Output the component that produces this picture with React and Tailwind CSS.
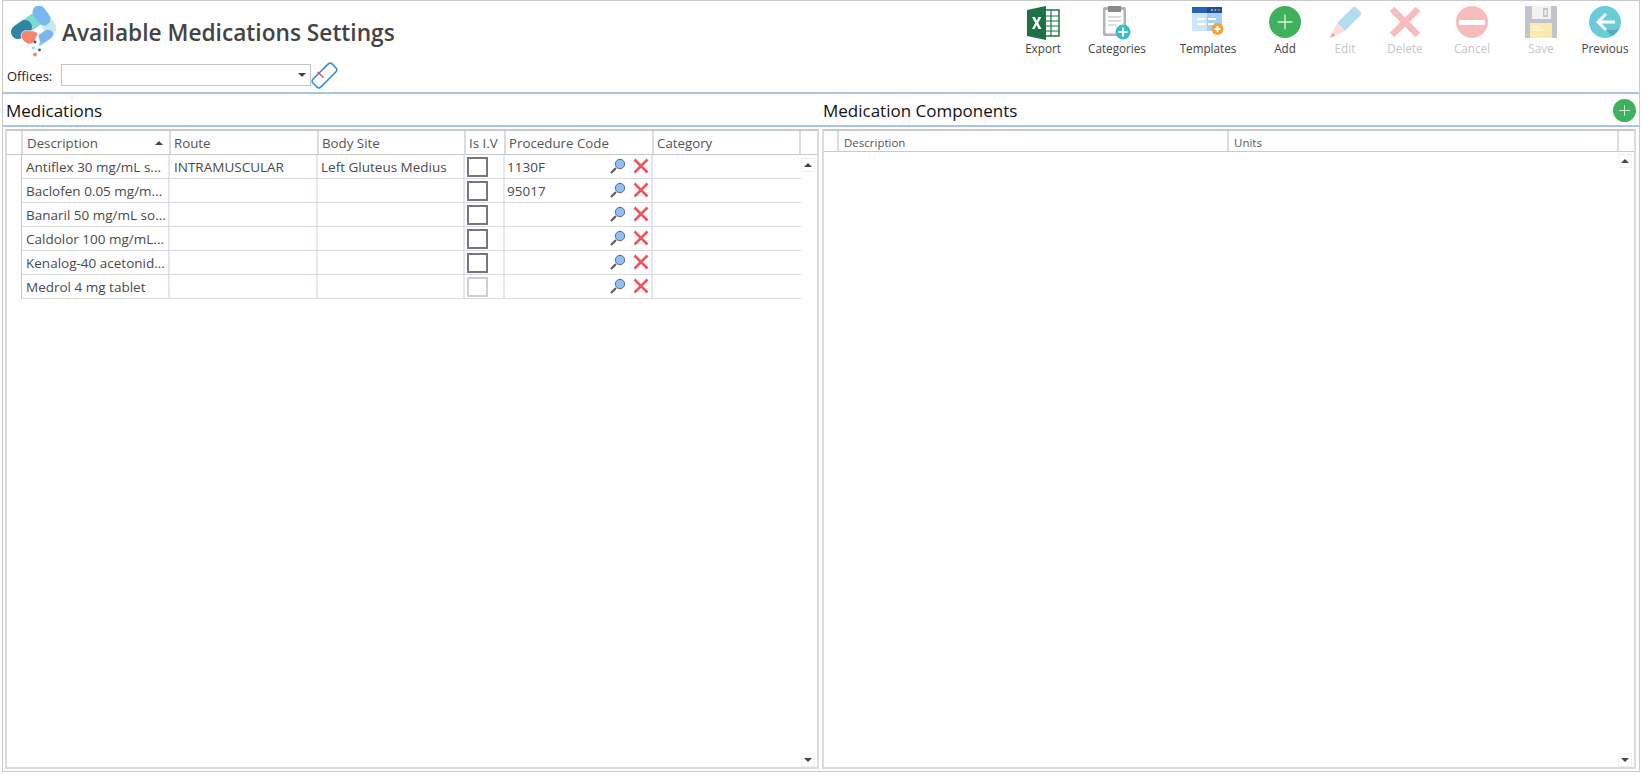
import React from "react";
import { Plus } from "lucide-react";

const FONT = "font-['Open_Sans','Noto_Sans',sans-serif]";

const medications = [
  { name: "Antiflex 30 mg/mL s...", route: "INTRAMUSCULAR", site: "Left Gluteus Medius", code: "1130F" },
  { name: "Baclofen 0.05 mg/m...", route: "", site: "", code: "95017" },
  { name: "Banaril 50 mg/mL so...", route: "", site: "", code: "" },
  { name: "Caldolor 100 mg/mL...", route: "", site: "", code: "" },
  { name: "Kenalog-40 acetonid...", route: "", site: "", code: "" },
  { name: "Medrol 4 mg tablet", route: "", site: "", code: "", disabled: true },
];

// coordinates are page pixels, hence the viewBox offset
const Logo = () => (
  <svg width="46" height="52" viewBox="9 5 46 52" className="shrink-0">
    <path d="M24 26 L37 17" stroke="#7edbcf" strokeWidth="14" />
    <path d="M17 31 L24 26" stroke="#2f86a0" strokeWidth="14" strokeLinecap="round" />
    <path d="M43 18 L49 27" stroke="#c8e9ea" strokeWidth="13" strokeLinecap="round" />
    <path d="M38 11 L43 18" stroke="#79b8ee" strokeWidth="13" strokeLinecap="round" />
    <path d="M24 29.5 Q20 31 20 35 Q21 41 28 43 Q32 43 33 41 L37 33 Q36 31 33 30 Z" fill="#f4866f" stroke="#fff" strokeWidth="0.6" />
    <path d="M37 34 L46 28 Q51 28 53 32 Q53 36 48 39 L42 43 Q40 44 39 42 Z" fill="#79b8ee" stroke="#fff" strokeWidth="0.6" />
    <circle cx="34" cy="41" r="1.4" fill="#2b5f8a" />
    <circle cx="39.5" cy="43" r="1.6" fill="#7edbcf" />
    <circle cx="32.5" cy="47" r="1.4" fill="#7edbcf" />
    <circle cx="38.5" cy="49" r="1.4" fill="#2b5f8a" />
    <circle cx="34" cy="53.5" r="1.9" fill="#f4866f" />
  </svg>
);

const ExcelIcon = () => (
  <svg width="34" height="34" viewBox="0 0 34 34">
    <rect x="18" y="4" width="15" height="26" fill="#fff" stroke="#217346" strokeWidth="1.5" />
    <path d="M19 10H33M19 15H33M19 20H33M19 25H33M25 4V30" stroke="#217346" strokeWidth="1.2" />
    <path d="M1 4 L20 0 V34 L1 30 Z" fill="#1e7145" />
    <path d="M6 11 H9 L10.7 14.8 L12.5 11 H15.3 L12.2 17 L15.5 23 H12.6 L10.7 19.1 L8.8 23 H6 L9.2 17 Z" fill="#fff" />
  </svg>
);

const CategoriesIcon = () => (
  <svg width="28" height="34" viewBox="0 0 28 34">
    <rect x="0" y="1" width="23" height="29" rx="2" fill="#b3b3b3" />
    <rect x="2.5" y="4" width="18" height="23.5" fill="#fff" />
    <rect x="5" y="0" width="13" height="6" fill="#8a8a8a" />
    <path d="M5 11H18M5 15H18M5 19H13" stroke="#bcbcbc" strokeWidth="1.2" />
    <circle cx="20" cy="26" r="7.5" fill="#36bfc4" />
    <path d="M20 21.5V30.5M15.5 26H24.5" stroke="#fff" strokeWidth="2" />
  </svg>
);

const TemplatesIcon = () => (
  <svg width="32" height="30" viewBox="0 0 32 30">
    <rect x="0" y="1" width="30" height="24" fill="#a8d0f2" />
    <rect x="0" y="1" width="15" height="24" fill="#cfe5f8" />
    <rect x="0" y="1" width="30" height="6" fill="#2a63b4" />
    <rect x="15" y="1" width="15" height="6" fill="#1f4f96" />
    <circle cx="20" cy="4" r="1" fill="#f0c14b" />
    <circle cx="23.5" cy="4" r="1" fill="#7bd08a" />
    <circle cx="27" cy="4" r="1" fill="#ee6a6a" />
    <path d="M5 13H13M5 18H13M16 13H24M16 18H22" stroke="#fff" strokeWidth="2" />
    <circle cx="25.5" cy="23" r="6" fill="#f6a43a" />
    <path d="M25.5 20V26M22.5 23H28.5" stroke="#fff" strokeWidth="2" />
  </svg>
);

const AddIcon = ({ size = 32 }) => (
  <span
    className={`flex items-center justify-center rounded-full bg-[#3fb05c] ${size === 32 ? "w-8 h-8" : "w-[23px] h-[23px]"}`}
  >
    <Plus size={size === 32 ? 24 : 17} strokeWidth={1.4} color="#d6f0dc" />
  </span>
);

const PencilIcon = () => (
  <svg width="33" height="33" viewBox="0 0 33 33">
    <path d="M8 17 L23 2 Q25 0 27 1.5 L31.5 6 Q33 8 31 10 L16 25 Z" fill="#b3dcec" />
    <path d="M1 32 L8 17 L16 25 Z" fill="#f9e0d4" />
    <path d="M1 32 L3.5 26.5 L6.5 29.5 Z" fill="#f2a8a0" />
  </svg>
);

const BigX = () => (
  <svg width="32" height="32" viewBox="0 0 32 32">
    <path d="M3 3 L29 29 M29 3 L3 29" stroke="#f9bcbc" strokeWidth="6.5" />
  </svg>
);

const CancelIcon = () => (
  <span className="flex items-center justify-center w-8 h-8 rounded-full bg-[#f7bcbc]">
    <span className="w-[26px] h-[5px] rounded-[1px] bg-white" />
  </span>
);

const SaveIcon = () => (
  <svg width="32" height="32" viewBox="0 0 32 32">
    <path d="M0 0 H32 V32 H0 Z" fill="#c1c4cc" />
    <path d="M7 0 H26 V13 H7 Z" fill="#f2f2f2" />
    <rect x="18" y="2" width="5" height="9" fill="#c1c4cc" />
    <rect x="19.5" y="4" width="2" height="5" fill="#f2f2f2" />
    <rect x="5" y="17" width="22" height="15" fill="#fbe9ae" />
    <path d="M8 21H15M8 24H18" stroke="#fff" strokeWidth="1.2" />
  </svg>
);

const PreviousIcon = () => (
  <svg width="32" height="32" viewBox="0 0 32 32">
    <circle cx="16" cy="16" r="16" fill="#68cdd8" />
    <path d="M9 16 L17 24 H27 L30 21 Q28 27 23 30 L17 24 Z" fill="#4fb0bb" />
    <path d="M17 8 L9 16 L17 24 M9 16 H26" fill="none" stroke="#fff" strokeWidth="3" />
  </svg>
);

const Eraser = () => (
  <svg width="27" height="27" viewBox="0 0 27 27" className="shrink-0">
    <rect x="0" y="8" width="27" height="11" rx="3" transform="rotate(-45 13.5 13.5)" fill="#fff" stroke="#3a8fd0" strokeWidth="1.6" />
    <path d="M6.5 10 L12.5 15.5" stroke="#e8477a" strokeWidth="1.6" />
  </svg>
);

const Magnifier = () => (
  <svg width="16" height="16" viewBox="0 0 16 16">
    <path d="M1 15 L6 10" stroke="#555" strokeWidth="2" />
    <circle cx="10" cy="6" r="4.7" fill="#8cc0f5" stroke="#666" strokeWidth="1" />
  </svg>
);

const RedX = () => (
  <svg width="16" height="16" viewBox="0 0 16 16">
    <path d="M1.5 1.5 L14.5 14.5 M14.5 1.5 L1.5 14.5" stroke="#f2545b" strokeWidth="2.6" />
  </svg>
);

const ToolButton = ({ width, label, disabled, children }) => (
  <div className={`flex flex-col items-center shrink-0 ${width}`}>
    <div className="h-[37px] pt-[5px] flex items-start justify-center">{children}</div>
    <span className={`text-[11.7px] leading-[20px] whitespace-nowrap ${disabled ? "text-[#c6c6c6]" : "text-[#444]"}`}>{label}</span>
  </div>
);

const ScrollTrack = () => (
  <div className="w-[16px] shrink-0 flex flex-col justify-between pr-[2px]">
    <ScrollButton up />
    <ScrollButton />
  </div>
);

const ScrollButton = ({ up }) => (
  <div className="w-[14px] h-[14px] border border-[#f0f0f0] flex items-center justify-center">
    <span
      className={`w-0 h-0 border-x-[4px] border-x-transparent ${up ? "border-b-[4px] border-b-[#444]" : "border-t-[4px] border-t-[#444]"}`}
    />
  </div>
);

const medColumns = "grid-cols-[16px_148px_148px_147px_40px_148px_147px_16px]";
const rowColumns = "grid-cols-[148px_148px_147px_40px_148px_147px]";

const HeaderCell = ({ children, className = "" }) => (
  <div className={`flex items-center h-full pl-[3px] pt-[3px] border-r-2 border-r-[#dcdcdc] text-[#555] truncate ${className}`}>
    {children}
  </div>
);

const MedRow = ({ med }) => (
  <div className={`grid ${rowColumns} h-[24px] border-b border-b-[#d8dade] text-[13.5px] text-[#4a4a4a]`}>
    <div className="flex items-center pl-[4px] pt-[2px] border-r-2 border-r-[#e3e7f1] whitespace-nowrap overflow-hidden">{med.name}</div>
    <div className="flex items-center pl-[4px] pt-[2px] border-r-2 border-r-[#e3e7f1] whitespace-nowrap">{med.route}</div>
    <div className="flex items-center pl-[3px] pt-[2px] border-r-2 border-r-[#e3e7f1] whitespace-nowrap overflow-hidden">{med.site}</div>
    <div className="flex items-center pl-[2px] border-r-2 border-r-[#e3e7f1]">
      <span className={`w-[21px] h-[20px] border-2 bg-white ${med.disabled ? "border-[#cfcfcf]" : "border-[#777]"}`} />
    </div>
    <div className="flex items-center pl-[2px] pr-[2px] border-r-2 border-r-[#e3e7f1]">
      <span className="flex-1 pt-[2px]">{med.code}</span>
      <span className="flex items-center gap-[7px] -mt-[2px]">
        <Magnifier />
        <RedX />
      </span>
    </div>
    <div />
  </div>
);

export default function App() {
  return (
    <div className={`h-screen w-full bg-white pl-[2px] pr-[2px] pb-[3px] overflow-hidden ${FONT}`}>
      <div className="h-full flex flex-col border border-[#c9c9c9]">
        <header className="h-[93px] shrink-0 flex justify-between border-b-2 border-b-[#a9c5e4]">
          <div className="pl-[7px] pt-[4px]">
            <div className="flex items-center h-[54px]">
              <Logo />
              <h1 className="ml-[6px] mt-[2px] text-[22.7px] font-semibold text-[#444] whitespace-nowrap">
                Available Medications Settings
              </h1>
            </div>
            <div className="flex items-center h-[30px] mt-[1px] -ml-[3px]">
              <span className="text-[13px] pt-[3px] text-[#222] w-[54px]">Offices:</span>
              <div className="w-[250px] h-[22px] border border-[#c4c4c4] flex items-center justify-end pr-[4px]">
                <span className="w-0 h-0 border-x-[4px] border-x-transparent border-t-[4px] border-t-[#444]" />
              </div>
              <Eraser />
            </div>
          </div>
          <div className="flex">
            <ToolButton width="w-[48px]" label="Export"><ExcelIcon /></ToolButton>
            <ToolButton width="w-[100px]" label="Categories"><CategoriesIcon /></ToolButton>
            <ToolButton width="w-[82px]" label="Templates"><TemplatesIcon /></ToolButton>
            <ToolButton width="w-[72px]" label="Add"><AddIcon /></ToolButton>
            <ToolButton width="w-[48px]" label="Edit" disabled><PencilIcon /></ToolButton>
            <ToolButton width="w-[72px]" label="Delete" disabled><BigX /></ToolButton>
            <ToolButton width="w-[62px]" label="Cancel" disabled><CancelIcon /></ToolButton>
            <ToolButton width="w-[76px]" label="Save" disabled><SaveIcon /></ToolButton>
            <ToolButton width="w-[52px]" label="Previous"><PreviousIcon /></ToolButton>
            <div className="w-[8px]" />
          </div>
        </header>

        <div className="h-[33px] shrink-0 flex border-b-2 border-b-[#a9c5e4]">
          <h2 className="w-[820px] pl-[3px] pt-[4px] text-[17px] text-[#111]">Medications</h2>
          <h2 className="flex-1 pt-[4px] text-[17px] text-[#111]">Medication Components</h2>
          <div className="pt-[5px] pr-[3px]"><AddIcon size={23} /></div>
        </div>

        <div className="flex-1 min-h-0 flex gap-[3px] pt-[2px] pl-[2px] pr-[3px] pb-[2px]">
          <section className="w-[814px] shrink-0 flex flex-col border-2 border-[#dcdcdc] border-t-[#c9c9c9]">
            <div className={`grid ${medColumns} h-[24px] shrink-0 border-b border-b-[#c9c9c9] text-[13.3px]`}>
              <HeaderCell />
              <HeaderCell className="pl-[4px]">
                <span className="flex-1">Description</span>
                <span className="w-0 h-0 mr-[6px] mb-[3px] border-x-[4px] border-x-transparent border-b-[4px] border-b-[#444]" />
              </HeaderCell>
              <HeaderCell>Route</HeaderCell>
              <HeaderCell>Body Site</HeaderCell>
              <HeaderCell>Is I.V</HeaderCell>
              <HeaderCell>Procedure Code</HeaderCell>
              <HeaderCell>Category</HeaderCell>
              <div />
            </div>
            <div className="flex-1 min-h-0 flex pt-[3px]">
              <div className="flex-1 pl-[14px] -mt-[3px]">
                <div className="border-l border-l-[#c9c9c9]">
                  {medications.map((med) => (
                    <MedRow key={med.name} med={med} />
                  ))}
                </div>
              </div>
              <ScrollTrack />
            </div>
          </section>

          <section className="flex-1 flex flex-col border-2 border-[#dcdcdc] border-t-[#c9c9c9]">
            <div className="grid grid-cols-[15px_390px_1fr_15px] h-[21px] shrink-0 border-b border-b-[#c9c9c9] text-[11.5px]">
              <HeaderCell />
              <HeaderCell className="pl-[5px] pt-[2px]">Description</HeaderCell>
              <HeaderCell className="pl-[5px] pt-[2px]">Units</HeaderCell>
              <div />
            </div>
            <div className="flex-1 min-h-0 flex justify-end pt-[2px]">
              <ScrollTrack />
            </div>
          </section>
        </div>
      </div>
    </div>
  );
}
